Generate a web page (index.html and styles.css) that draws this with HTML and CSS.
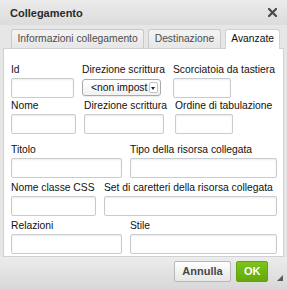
FILE: index.html
```html
<!DOCTYPE html>
<html>
<head>
<meta charset="utf-8">
<link rel="stylesheet" href="styles.css">
</head>
<body>
<div class="dialog">
  <div class="titlebar">
    <span class="title">Collegamento</span>
    <svg class="close" width="9" height="9" viewBox="0 0 9 9"><path d="M1 1L8 8M8 1L1 8" stroke="#4a4a4a" stroke-width="2.2" stroke-linecap="square"/></svg>
  </div>
  <div class="tabs">
    <div class="tab">Informazioni collegamento</div>
    <div class="tab">Destinazione</div>
    <div class="tab active">Avanzate</div>
  </div>
  <div class="content">
    <div class="row">
      <div class="field"><div class="lbl">Id</div><div class="input w63"></div></div>
      <div class="field"><div class="lbl">Direzione scrittura</div>
        <div class="select w79"><span class="seltext">&lt;non impostato&gt;</span><span class="arrow"></span></div>
      </div>
      <div class="field"><div class="lbl">Scorciatoia da tastiera</div><div class="input w58"></div></div>
    </div>
    <div class="row">
      <div class="field"><div class="lbl">Nome</div><div class="input w65"></div></div>
      <div class="field"><div class="lbl">Direzione scrittura</div><div class="input w80"></div></div>
      <div class="field"><div class="lbl">Ordine di tabulazione</div><div class="input w58"></div></div>
    </div>
    <div class="row sect">
      <div class="field"><div class="lbl">Titolo</div><div class="input w111"></div></div>
      <div class="field grow"><div class="lbl">Tipo della risorsa collegata</div><div class="input full"></div></div>
    </div>
    <div class="row lower">
      <div class="field"><div class="lbl">Nome classe CSS</div><div class="input w85"></div></div>
      <div class="field grow"><div class="lbl">Set di caretteri della risorsa collegata</div><div class="input full"></div></div>
    </div>
    <div class="row lower">
      <div class="field"><div class="lbl">Relazioni</div><div class="input w111"></div></div>
      <div class="field grow"><div class="lbl">Stile</div><div class="input full"></div></div>
    </div>
  </div>
  <div class="footer">
    <button class="btn cancel">Annulla</button>
    <button class="btn ok">OK</button>
    <span class="grip"></span>
  </div>
</div>
</body>
</html>
```

FILE: styles.css
```css
html, body {
  margin: 0;
  padding: 0;
}
body {
  width: 287px;
  height: 289px;
  overflow: hidden;
  background: #e4e4e4;
  font-family: "Liberation Sans", Arial, Helvetica, sans-serif;
  color: #111;
}
.dialog {
  width: 287px;
  height: 289px;
  display: flex;
  flex-direction: column;
  background: #e6e6e6;
}
.titlebar {
  height: 25px;
  flex: none;
  display: flex;
  align-items: center;
  justify-content: space-between;
  padding: 0 10px 0 10px;
  background: linear-gradient(#ebebeb, #dcdcdc);
}
.title {
  font-size: 11px;
  font-weight: bold;
  color: #2b2b2b;
}
.close {
  display: block;
}
.tabs {
  height: 23px;
  flex: none;
  box-sizing: border-box;
  display: flex;
  align-items: flex-end;
  gap: 4px;
  padding-left: 11px;
  background: #e6e6e6;
}
.tab {
  height: 19px;
  box-sizing: border-box;
  line-height: 18px;
  padding: 0 5.5px;
  font-size: 10.3px;
  color: #4d4d4d;
  border: 1px solid #c9c9c9;
  border-bottom: none;
  border-radius: 3px 3px 0 0;
  background: linear-gradient(#f4f4f4, #e6e6e6);
  white-space: nowrap;
}
.tab.active {
  height: 20px;
  margin-bottom: -1px;
  background: #fff;
  color: #111;
  border-color: #d1d1d1;
  position: relative;
  z-index: 1;
}
.content {
  flex: 1;
  margin: 0 3px;
  background: #fff;
  border: 1px solid #d1d1d1;
  padding: 14px 6px 0 7px;
  display: flex;
  flex-direction: column;
  gap: 1px;
}
.row {
  display: flex;
  gap: 8px;
}
.row.sect {
  margin-top: 8px;
}
.row.lower {
  margin-top: 2px;
}
.field {
  display: flex;
  flex-direction: column;
}
.field.grow {
  flex: 1;
}
.lbl {
  font-size: 10.3px;
  line-height: 14px;
  height: 14px;
  margin-bottom: 1px;
  white-space: nowrap;
  color: #111;
}
.input {
  height: 20px;
  box-sizing: border-box;
  border: 1px solid #c9cccf;
  border-radius: 2px;
  background: #fff;
  box-shadow: inset 0 1px 2px rgba(0, 0, 0, 0.08);
}
.w58 { width: 58px; }
.w63 { width: 63px; }
.w65 { width: 65px; }
.w79 { width: 79px; }
.w80 { width: 80px; }
.w85 { width: 85px; }
.w111 { width: 111px; }
.full { width: 100%; }
.select {
  height: 17px;
  margin-top: 1px;
  box-sizing: border-box;
  border: 1px solid #a9a9a9;
  border-radius: 3px;
  background: linear-gradient(#ffffff, #f1f1f1);
  display: flex;
  align-items: center;
  overflow: hidden;
  box-shadow: 0 1px 1px rgba(0, 0, 0, 0.08);
}
.seltext {
  flex: 1;
  min-width: 0;
  overflow: hidden;
  white-space: nowrap;
  font-size: 10.3px;
  line-height: 15px;
  padding-left: 8px;
  color: #111;
}
.arrow {
  flex: none;
  width: 9px;
  height: 11px;
  margin: 0 2px 0 1px;
  box-sizing: border-box;
  border: 1px solid #c4c4c4;
  border-radius: 2px;
  background: #fff;
  position: relative;
}
.arrow::after {
  content: "";
  position: absolute;
  left: 1px;
  top: 4px;
  border-left: 2.5px solid transparent;
  border-right: 2.5px solid transparent;
  border-top: 3px solid #222;
}
.footer {
  height: 32px;
  flex: none;
  box-sizing: border-box;
  display: flex;
  justify-content: flex-end;
  align-items: flex-start;
  gap: 5px;
  padding: 4px 4px 0 0;
  background: linear-gradient(#ececec, #d8d8d8);
}
.btn {
  height: 21px;
  box-sizing: border-box;
  margin: 0;
  font-family: inherit;
  font-size: 11px;
  font-weight: bold;
  border-radius: 2px;
  padding: 0 7px;
  line-height: 19px;
  cursor: default;
}
.btn.cancel {
  width: 57px;
  color: #474747;
  border: 1px solid #b9b9b9;
  background: linear-gradient(#ffffff, #e6e6e6);
}
.btn.ok {
  width: 32px;
  color: #fff;
  border: 1px solid #65a30d;
  background: linear-gradient(#7dc41a, #64a80b);
}
.grip {
  width: 0;
  height: 0;
  margin: 14px 0 0 4px;
  border-left: 6px solid transparent;
  border-bottom: 6px solid #5a5a5a;
}
```
